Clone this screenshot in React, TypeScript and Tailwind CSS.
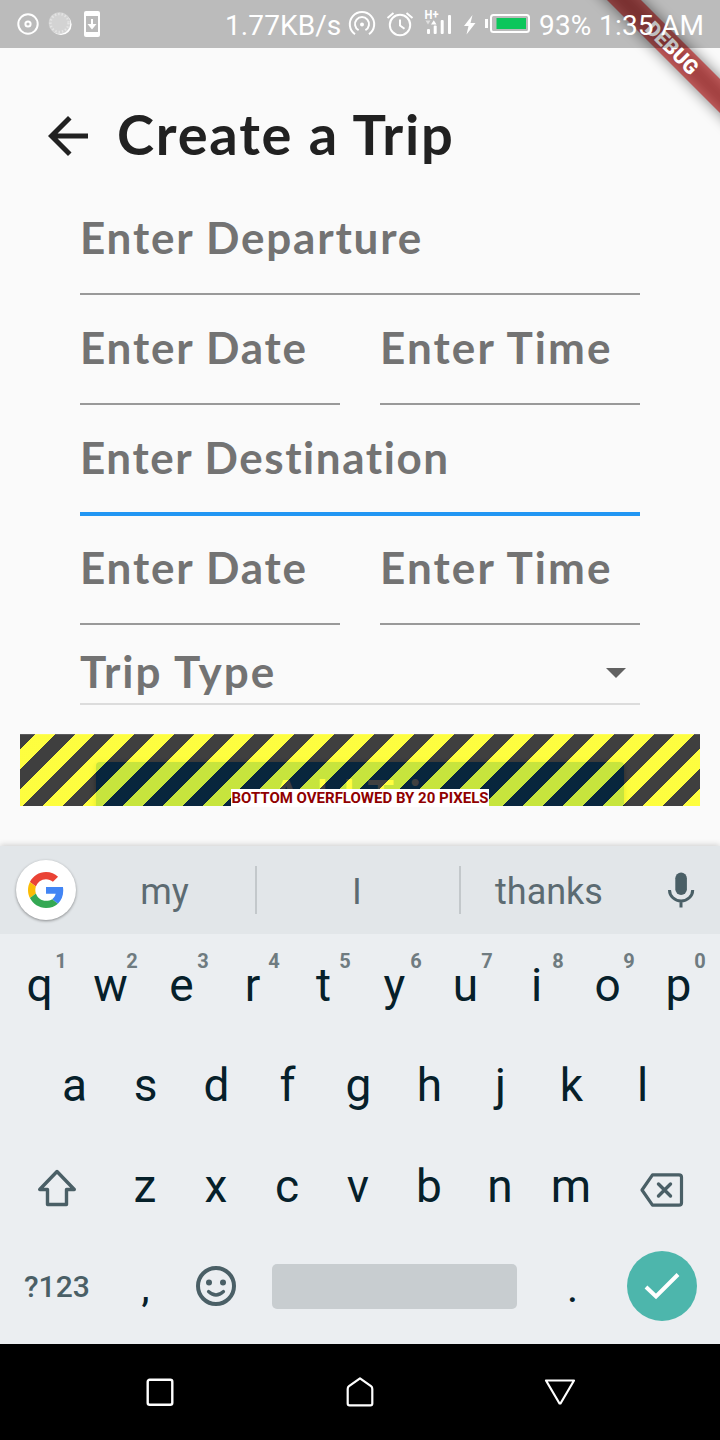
import type { ReactNode } from "react";

const lato = "font-['Lato','Open_Sans',sans-serif] font-bold whitespace-nowrap";

function StatusBar() {
  return (
    <header className="relative z-10 flex h-12 shrink-0 items-center bg-black/25 text-[28px] leading-[48px] text-white">
      <svg className="h-12 w-[112px] shrink-0" viewBox="0 0 112 48" fill="none">
        <circle cx="28" cy="24" r="9.7" stroke="#fff" strokeWidth="2" />
        <circle cx="28" cy="24" r="2.6" stroke="#fff" strokeWidth="2" />
        <circle cx="61" cy="24.5" r="10.6" fill="#fff" />
        <circle cx="59.5" cy="23" r="10.8" fill="#d3d3d3" />
        <circle cx="59.5" cy="23" r="9" stroke="#e4e4e4" strokeWidth="2.4" strokeDasharray="1.4 2" />
        <rect x="84" y="11" width="16" height="26" rx="2" fill="#fff" />
        <path d="M86 16h12v16h-12z" fill="#bababa" />
        <path d="M91 19h2v5h3.5L92 29.500 87.500 24H91z" fill="#fff" />
      </svg>
      <span className="ml-[113px] w-[119px] pt-[3px] tracking-[0.1px]">1.77KB/s</span>
      <svg className="h-12 w-[192px] shrink-0" viewBox="344 0 192 48" fill="none" stroke="#fff" strokeWidth="2">
        <path d="M355 34.200A12.200 12.200 0 1 1 369 34.200" />
        <path d="M358.600 30.200A7 7 0 1 1 365.400 30.200" />
        <circle cx="362" cy="24.500" r="2" fill="#fff" stroke="none" />
        <circle cx="400" cy="25" r="10.200" />
        <path d="M400 19.500v6l4.500 3.200M387.500 18l6-5M412.500 18l-6-5" />
        <text x="424.500" y="18.500" fill="#fff" stroke="none" className="text-[12px] font-bold" textLength="14" lengthAdjust="spacingAndGlyphs">H+</text>
        <g fill="#fff" stroke="none">
          <path d="M425.500 20.500h5l-2.500 4z" fill="#dedede" />
          <path d="M431 24.500h5.500l-2.700-4.300z" />
          <rect x="427" y="29" width="3" height="5" rx="1" />
          <rect x="433.700" y="25.500" width="3" height="8.500" rx="1" />
          <rect x="440.700" y="20" width="3" height="14" rx="1" />
          <rect x="448" y="15" width="3" height="19" rx="1" />
          <path d="M472.500 15L464 26h4.500l-2 8.500L475.500 23h-5z" />
          <rect x="485" y="19" width="3" height="9" />
        </g>
        <rect x="491" y="15" width="38" height="17" rx="2.500" />
        <rect x="496.500" y="18" width="29.500" height="11" fill="#0cc65b" stroke="none" />
      </svg>
      <span className="ml-[3px] w-[60px] pt-[3px] tracking-[0.2px]">93%</span>
      <span className="pt-[3px] tracking-[0.2px]">1:35 AM</span>
    </header>
  );
}

function DebugBanner() {
  return (
    <div className="absolute top-0 right-0 h-[160px] w-[160px] overflow-hidden">
      <div className="absolute top-[36px] left-[-8px] h-6 w-[240px] rotate-45">
        <div className="absolute inset-0 bg-black/50 blur-[7px]" />
        <div className="absolute inset-0 bg-[#b71c1c]/63 text-center text-[20.4px] leading-6 font-black text-white">
          DEBUG
        </div>
      </div>
    </div>
  );
}

function Field({
  label,
  focused = false,
  tracking = "tracking-[1.8px]",
}: {
  label: string;
  focused?: boolean;
  tracking?: string;
}) {
  return (
    <div
      className={`flex flex-col pt-[25px] ${
        focused ? "mb-[-1px] h-[111px] border-b-4 border-[#2196f3]" : "h-[110px] border-b-2 border-[#999999]"
      }`}
    >
      <span className={`${lato} ${tracking} text-[44px] leading-[54px] text-[#737373]`}>{label}</span>
    </div>
  );
}

function DateTimeRow() {
  return (
    <div className="grid grid-cols-2 gap-10">
      <Field label="Enter Date" />
      <Field label="Enter Time" tracking="tracking-[2.1px]" />
    </div>
  );
}

function OverflowArea() {
  return (
    <div className="relative mx-5 mt-[29px] h-[73px]">
      <div className="h-[72px] overflow-hidden pt-7">
        <div className={`${lato} mx-[76px] h-24 rounded-[4px] bg-[#2196f3] pt-[6px] text-center text-[44px] leading-[54px] tracking-[1.8px] text-white shadow-[0_2px_6px_rgba(0,0,0,0.35)]`}>
          Add Trip
        </div>
      </div>
      <div className="absolute inset-x-0 top-0 h-[72px] bg-[repeating-linear-gradient(135deg,#000000bf_0px,#000000bf_10.607px,#ffff00bf_10.607px,#ffff00bf_24.749px,#000000bf_24.749px,#000000bf_28.284px)]" />
      <div className="absolute inset-x-0 top-0 h-px bg-white/15" />
      <div className="absolute top-[55px] left-[211px] h-[18px] w-[258px] bg-white text-center text-[15px] leading-[18px] font-bold whitespace-nowrap text-[#900000]">
        BOTTOM OVERFLOWED BY 20 PIXELS
      </div>
    </div>
  );
}

function Suggestions() {
  return (
    <div className="flex h-[88px] items-center bg-[#e2e6e9] text-[36px] text-[#5c6b72]">
      <div className="ml-4 flex size-[60px] items-center justify-center rounded-full bg-white shadow-[0_1px_3px_rgba(0,0,0,0.4)]">
        <svg className="size-9" viewBox="0 0 48 48">
          <path fill="#EA4335" d="M24 9.500c3.540 0 6.710 1.220 9.210 3.600l6.850-6.850C35.900 2.380 30.470 0 24 0 14.620 0 6.510 5.380 2.560 13.220l7.980 6.190C12.430 13.720 17.740 9.500 24 9.500z" />
          <path fill="#4285F4" d="M46.980 24.550c0-1.570-.15-3.090-.38-4.550H24v9.020h12.940c-.58 2.960-2.260 5.480-4.780 7.180l7.730 6c4.510-4.180 7.090-10.360 7.090-17.650z" />
          <path fill="#FBBC05" d="M10.530 28.590c-.48-1.450-.76-2.990-.76-4.590s.27-3.140.76-4.590l-7.980-6.190C.92 16.460 0 20.120 0 24c0 3.880.92 7.540 2.560 10.780l7.970-6.190z" />
          <path fill="#34A853" d="M24 48c6.480 0 11.930-2.130 15.890-5.810l-7.730-6c-2.150 1.450-4.920 2.300-8.160 2.300-6.260 0-11.570-4.220-13.470-9.910l-7.980 6.190C6.510 42.620 14.620 48 24 48z" />
        </svg>
      </div>
      <span className="w-[179px] pt-[4px] pr-[2px] text-center">my</span>
      <span className="h-12 w-[2px] bg-[#c3c8cb]" />
      <span className="w-[202px] pt-[4px] pr-[2px] text-center">I</span>
      <span className="h-12 w-[2px] bg-[#c3c8cb]" />
      <span className="w-[176px] pt-[4px] text-center">thanks</span>
      <svg className="mb-[1px] ml-[30px] h-9 w-[28px]" viewBox="0 0 28 36" fill="none">
        <rect x="8.300" y="0.500" width="11.600" height="22.500" rx="5.800" fill="#4a5f66" />
        <path d="M2.500 18a11.600 11 0 0 0 23.200 0M14 29V35.500" stroke="#4a5f66" strokeWidth="3" />
      </svg>
    </div>
  );
}

function Key({ children, hint }: { children: ReactNode; hint?: string }) {
  return (
    <div className="relative flex h-[101px] w-[71px] shrink-0 items-center justify-center">
      {children}
      {hint && (
        <span className="absolute top-[15px] left-[45px] w-6 text-center text-[20px] leading-6 font-bold text-[#6f7b80]">
          {hint}
        </span>
      )}
    </div>
  );
}

function Keyboard() {
  return (
    <section className="relative h-[498px] shrink-0 bg-[#ebeef1] text-[46px] text-[#06202a] shadow-[0_-1px_6px_rgba(0,0,0,0.18)]">
      <Suggestions />
      <div className="flex pl-[4px]">
        {[..."qwertyuiop"].map((k, i) => (
          <Key key={k} hint={String((i + 1) % 10)}>
            <span className="pt-px">{k}</span>
          </Key>
        ))}
      </div>
      <div className="flex pl-[39px]">
        {[..."asdfghjkl"].map((k) => (
          <Key key={k}>{k}</Key>
        ))}
      </div>
      <div className="flex items-center">
        <div className="flex w-[109.500px] shrink-0 justify-center pt-[2px] pl-[5px]">
          <svg className="h-[38px] w-10" viewBox="0 0 40 38" fill="none" stroke="#4a5f66" strokeWidth="3.400" strokeLinejoin="round">
            <path d="M20 2.500L2.700 20.500H10.500V35.500H29.500V20.500H37.300z" />
          </svg>
        </div>
        {[..."zxcvbnm"].map((k) => (
          <Key key={k}>{k}</Key>
        ))}
        <svg className="mt-[6px] ml-[33.500px] h-[34px] w-11" viewBox="0 0 44 34" fill="none" stroke="#4a5f66" strokeWidth="3.200" strokeLinejoin="round">
          <path d="M12.500 1.800H39Q41.500 1.800 41.500 4.300V29.700Q41.500 32.200 39 32.200H12.500L2 17z" />
          <path d="M18.500 11L30.500 23M30.500 11L18.500 23" strokeWidth="3.400" strokeLinecap="round" />
        </svg>
      </div>
      <div className="flex h-[99px] items-center">
        <span className="ml-6 w-[86px] text-[30px] font-medium text-[#4a5f66]">?123</span>
        <Key><span className="pt-[5px] text-[36px] font-medium">,</span></Key>
        <svg className="mb-[2px] ml-[15px] size-10" viewBox="0 0 40 40" fill="none" stroke="#4a5f66" strokeWidth="4">
          <circle cx="20" cy="20" r="18" />
          <circle cx="13" cy="16.500" r="3" fill="#4a5f66" stroke="none" />
          <circle cx="27" cy="16.500" r="3" fill="#4a5f66" stroke="none" />
          <path d="M12.500 25.500Q20 32.500 27.500 25.500" strokeWidth="3.200" strokeLinecap="round" />
        </svg>
        <span className="ml-9 h-[45px] w-[245px] rounded-[5px] bg-[#c8cdd0]" />
        <div className="ml-5">
          <Key><span className="pt-[6px] text-[36px] font-medium">.</span></Key>
        </div>
        <div className="mb-[2px] ml-[19px] flex size-[70px] items-center justify-center rounded-full bg-[#4db6ac]">
          <svg className="h-7 w-9" viewBox="0 0 36 28" fill="none" stroke="#fff" strokeWidth="4">
            <path d="M2 15L12 24.500L34 2.500" />
          </svg>
        </div>
      </div>
    </section>
  );
}

function NavBar() {
  return (
    <nav className="flex h-24 shrink-0 items-center justify-center gap-[168px] bg-black">
      <svg className="size-8" viewBox="0 0 32 32" fill="none" stroke="#fff" strokeWidth="2.400">
        <rect x="3.700" y="3.800" width="24.600" height="25" rx="2" />
      </svg>
      <svg className="size-8" viewBox="0 0 32 32" fill="none" stroke="#fff" strokeWidth="2.200" strokeLinejoin="round">
        <path d="M16 2.300L27 10.200Q28.300 11.200 28.300 13V27.500Q28.300 29.300 26.500 29.300H5.500Q3.700 29.300 3.700 27.500V13Q3.700 11.200 5 10.200z" />
      </svg>
      <svg className="size-8" viewBox="0 0 32 32" fill="none" stroke="#fff" strokeWidth="2.200" strokeLinejoin="round">
        <path d="M2 4.500H30L16.500 27.500H15.500z" />
      </svg>
    </nav>
  );
}

export default function App() {
  return (
    <div className="relative flex h-[1440px] w-[720px] flex-col overflow-hidden bg-[#fafafa] font-['Roboto',sans-serif]">
      <DebugBanner />
      <StatusBar />
      <main className="h-[798px] shrink-0">
        <div className="flex h-[137px] items-center pt-[39px] pl-[38px]">
          <svg className="size-[60px]" viewBox="0 0 24 24" fill="#212121">
            <path d="M20 11H7.830l5.590-5.590L12 4l-8 8 8 8 1.410-1.410L7.830 13H20v-2z" />
          </svg>
          <h1 className={`${lato} mb-[4px] ml-[19px] text-[56px] leading-[68px] tracking-[1.8px] text-[#212121]`}>Create a Trip</h1>
        </div>
        <div className="px-20">
          <Field label="Enter Departure" />
          <DateTimeRow />
          <Field label="Enter Destination" focused tracking="tracking-[1.55px]" />
          <DateTimeRow />
          <div className="flex h-[80px] items-center justify-between border-b-2 border-[#dcdcdc] pt-[16px]">
            <span className={`${lato} mb-[3px] text-[44px] leading-[54px] tracking-[2px] text-[#737373]`}>Trip Type</span>
            <svg className="size-12" viewBox="0 0 24 24" fill="#616161">
              <path d="M7 10l5 5 5-5z" />
            </svg>
          </div>
        </div>
        <OverflowArea />
      </main>
      <Keyboard />
      <NavBar />
    </div>
  );
}
